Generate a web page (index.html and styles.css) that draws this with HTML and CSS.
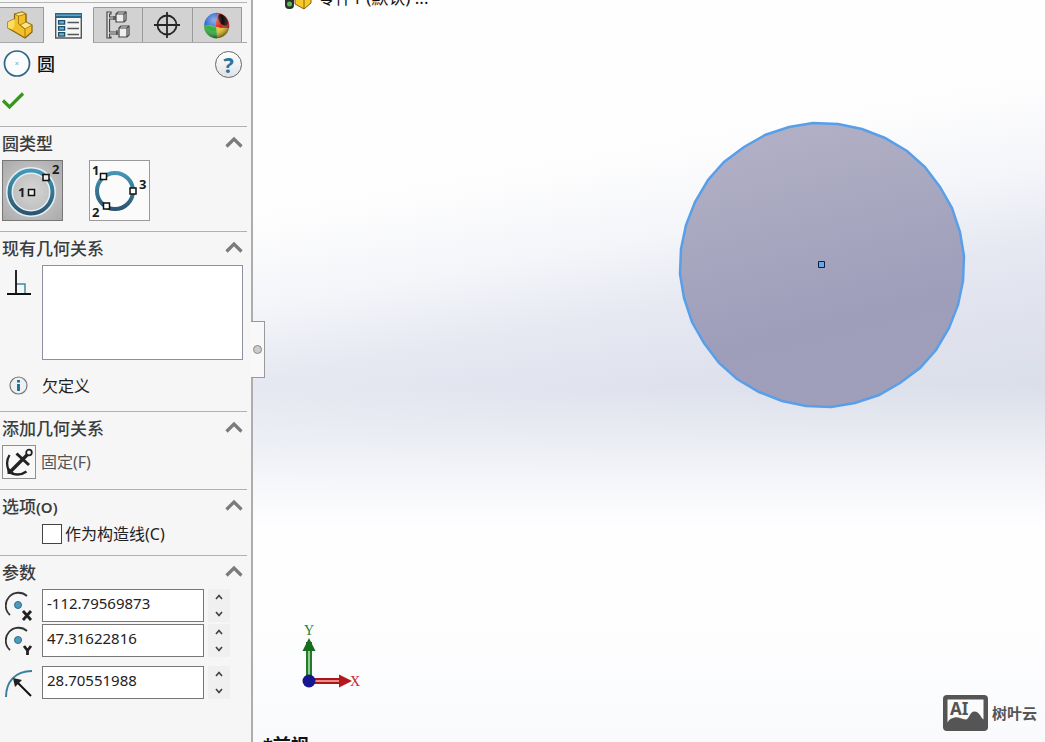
FILE: index.html
```html
<!DOCTYPE html>
<html lang="zh-CN">
<head>
<meta charset="utf-8">
<title>圆</title>
<link rel="stylesheet" href="styles.css">
</head>
<body>
<svg class="defs" width="0" height="0" aria-hidden="true">
  <defs>
    <linearGradient id="ring" x1="0" y1="0" x2="0" y2="1"><stop offset="0" stop-color="#4396b5"/><stop offset="1" stop-color="#2c5670"/></linearGradient>
    <linearGradient id="face" x1="0.35" y1="0" x2="0.6" y2="1"><stop offset="0" stop-color="#b1b0c5"/><stop offset="0.7" stop-color="#9e9ebb"/><stop offset="1" stop-color="#a09fba"/></linearGradient>
    <radialGradient id="shade" cx="0.4" cy="0.3" r="0.7"><stop offset="0" stop-color="#fff" stop-opacity="0.45"/><stop offset="0.5" stop-color="#fff" stop-opacity="0"/><stop offset="1" stop-color="#000" stop-opacity="0.5"/></radialGradient>
    <symbol id="chevron" viewBox="0 0 18 12"><path d="M1.500 10.500 9 3l7.500 7.500" fill="none" stroke="#7b7b7b" stroke-width="3.200"/></symbol>
    <symbol id="up" viewBox="0 0 8 6"><path d="M1 5l3-3.500L7 5" fill="none" stroke="#444" stroke-width="1.700"/></symbol>
    <symbol id="down" viewBox="0 0 8 6"><path d="M1 1l3 3.500L7 1" fill="none" stroke="#444" stroke-width="1.700"/></symbol>
    <symbol id="part" viewBox="0 0 26 28"><path d="M7.500 3 15 1l4 2v8l6 3v7l-7 6L1 17v-6l6.500-3z" fill="#f3c02a" stroke="#8a6508" stroke-width="1.200" stroke-linejoin="round"/><path d="M7.500 3 15 1l4 2-7.500 2zM13 14l6-3 6 3-7 4z" fill="#ffe680" stroke="#9a7310" stroke-width="0.800" stroke-linejoin="round"/><path d="M1 11l6.500-3v6l-2 4.500L1 17z" fill="#ffdf5e"/><path d="M11.500 5v8L18 18v9M19 3v8" fill="none" stroke="#9a7310" stroke-width="0.900"/></symbol>
  </defs>
</svg>
<div class="app">
  <aside class="panel">
    <nav class="tabs">
      <button class="tab tab-first" aria-label="特征"><svg width="26" height="28"><use href="#part"/></svg></button>
      <button class="tab tab-active" aria-label="属性"><svg width="27" height="26" viewBox="0 0 27 26"><path d="M.7 1h25.600v24H.7z" fill="#f4f6f7" stroke="#555" stroke-width="1.400"/><path d="M0 0h27v5H0z" fill="#27688a"/><path d="M1 1.500h25v1.500H1z" fill="#5aa5c4"/><g fill="#6fb4d3" stroke="#1f4e69" stroke-width="1.300"><path d="M3.600 7.600h6v3.500h-6zM3.600 13.600h6v3.500h-6zM3.600 19.600h6v3.500h-6z"/></g><path d="M12.500 9.500H24M12.500 15.500H24M12.500 21.500H24" stroke="#555" stroke-width="1.400"/></svg></button>
      <button class="tab" aria-label="配置"><svg width="24" height="28" viewBox="0 0 24 28"><g fill="#eee" stroke="#444" stroke-width="1.200"><path d="M1 1h4v2H3.500v3H10v2H3.500v13H11v2H3.500v3H5v1H1z"/><path d="M10 3l2-2h8v8l-2 2h-8zM13 17l2-2h8v9l-2 2h-8z"/><path d="M10 3h8v8M18 3l2-2M13 17h8v9M21 17l2-2M8 5v4M11 19v5" fill="none"/></g></svg></button>
      <button class="tab" aria-label="尺寸专家"><svg width="28" height="28" viewBox="0 0 28 28"><g fill="none" stroke="#262626" stroke-width="1.800"><circle cx="14" cy="14" r="9.500"/><path d="M14 1v26M1 14h26"/></g></svg></button>
      <button class="tab" aria-label="外观"><svg width="27" height="27" viewBox="0 0 27 27"><path d="M13 15Q6 12 1 14A13 13 0 0 1 16 1Q12 7 13 15z" fill="#356fd1"/><path d="M13 15Q12 7 16 1A13 13 0 0 1 26 16Q20 17 13 15z" fill="#cf2620"/><path d="M13 15Q20 17 26 16A13 13 0 0 1 14 26.500Q14 20 13 15z" fill="#e6c52c"/><path d="M13 15Q14 20 14 26.500A13 13 0 0 1 1 14Q6 12 13 15z" fill="#32ae3f"/><ellipse cx="20" cy="8" rx="3.800" ry="6.500" transform="rotate(-35 20 8)" fill="#180808"/><circle cx="13.500" cy="13.500" r="12.800" fill="url(#shade)"/></svg></button>
    </nav>
    <header class="heading">
      <svg width="28" height="28" viewBox="0 0 28 28"><circle cx="14" cy="13.500" r="12.500" fill="#fafcfd" stroke="#2c6585" stroke-width="1.700"/><path d="M12.500 12l3 3m0-3l-3 3" stroke="#62a5c6" stroke-width="0.800"/></svg>
      <h1 class="title">圆</h1>
      <button class="help" aria-label="帮助">?</button>
    </header>
    <div class="confirm"><button class="bare" aria-label="确定"><svg width="24" height="18" viewBox="0 0 24 18"><path d="M2 8.500 8.500 15 22 1.500" fill="none" stroke="#37961c" stroke-width="3.200"/></svg></button></div>

    <section class="group">
      <div class="group-head"><h2 class="group-title">圆类型</h2><button class="bare" aria-label="折叠"><svg width="18" height="12"><use href="#chevron"/></svg></button></div>
      <div class="types">
        <button class="type type-on" aria-label="圆"><svg width="59" height="59" viewBox="0 0 59 59"><circle cx="28" cy="31" r="21.500" fill="none" stroke="#e4f0f5" stroke-width="7"/><circle cx="28" cy="31" r="21.500" fill="none" stroke="url(#ring)" stroke-width="4"/><path d="M40 13.500h6v6h-6zM25.500 28.500h6v6h-6z" fill="#eee" stroke="#111" stroke-width="1.500"/><text class="mark" x="49" y="13">2</text><text class="mark" x="15" y="36">1</text></svg></button>
        <button class="type" aria-label="周边圆"><svg width="59" height="59" viewBox="0 0 59 59"><circle cx="25" cy="30" r="18" fill="none" stroke="url(#ring)" stroke-width="4"/><path d="M10.500 12.500h6v6h-6zM40 27h6v6h-6zM13.500 42h6v6h-6z" fill="#fff" stroke="#111" stroke-width="1.500"/><text class="mark" x="2" y="14">1</text><text class="mark" x="49" y="28">3</text><text class="mark" x="2" y="56">2</text></svg></button>
      </div>
    </section>

    <section class="group">
      <div class="group-head"><h2 class="group-title">现有几何关系</h2><button class="bare" aria-label="折叠"><svg width="18" height="12"><use href="#chevron"/></svg></button></div>
      <div class="relations">
        <svg class="perp" width="26" height="27" viewBox="0 0 26 27"><path d="M10 15h9v9" fill="none" stroke="#3e89a8" stroke-width="1.500"/><path d="M10 1v24M1 25h24" fill="none" stroke="#111" stroke-width="1.800"/></svg>
        <div class="list" role="listbox" aria-label="现有几何关系"></div>
      </div>
      <div class="status">
        <svg width="19" height="19" viewBox="0 0 19 19"><circle cx="9.500" cy="9.500" r="8.500" fill="#edf1f3" stroke="#777" stroke-width="1.200"/><path d="M9.500 4v2.500M9.500 8v7" stroke="#206991" stroke-width="2.800"/></svg>
        <span>欠定义</span>
      </div>
    </section>

    <section class="group">
      <div class="group-head"><h2 class="group-title">添加几何关系</h2><button class="bare" aria-label="折叠"><svg width="18" height="12"><use href="#chevron"/></svg></button></div>
      <div class="fix">
        <button class="fix-button" id="fix" aria-label="固定(F)"><svg width="32" height="32" viewBox="0 0 32 32"><g fill="none" stroke="#222"><path d="M24.500 8.500 8 25" stroke-width="3.400"/><path d="M13.500 7.500 26 19" stroke-width="3"/><circle cx="26" cy="6.500" r="2.800" stroke-width="1.800"/><path d="M6.500 9C3.500 14 3.500 20 6 25.500 11 29.500 18 29.500 23.500 25.500" stroke-width="2.300"/></g><path d="M4.500 28v-7.500l7.500 7.500z" fill="#222"/></svg></button>
        <label for="fix">固定(F)</label>
      </div>
    </section>

    <section class="group">
      <div class="group-head"><h2 class="group-title">选项<span class="key">(O)</span></h2><button class="bare" aria-label="折叠"><svg width="18" height="12"><use href="#chevron"/></svg></button></div>
      <div class="option"><input class="check" type="checkbox" id="construction"><label for="construction">作为构造线(C)</label></div>
    </section>

    <section class="group">
      <div class="group-head"><h2 class="group-title">参数</h2><button class="bare" aria-label="折叠"><svg width="18" height="12"><use href="#chevron"/></svg></button></div>
      <div class="params">
        <div class="param">
          <svg width="28" height="30" viewBox="0 0 28 30"><path d="M5 24A12 12 0 0 1 22 5" fill="none" stroke="#333" stroke-width="1.800"/><circle cx="13" cy="14" r="3.500" fill="#4c9cbd" stroke="#2f6d8c"/><path d="M18 20l8 9m0-9l-8 9" stroke="#222" stroke-width="2.800"/></svg>
          <input class="value" type="text" aria-label="圆心 X 坐标" value="-112.79569873">
          <div class="spin"><button class="step" aria-label="增加"><svg width="8" height="6"><use href="#up"/></svg></button><button class="step" aria-label="减少"><svg width="8" height="6"><use href="#down"/></svg></button></div>
        </div>
        <div class="param">
          <svg width="28" height="30" viewBox="0 0 28 30"><path d="M5 24A12 12 0 0 1 22 5" fill="none" stroke="#333" stroke-width="1.800"/><circle cx="13" cy="14" r="3.500" fill="#4c9cbd" stroke="#2f6d8c"/><path d="M19 20l3.500 4.500L26 20M22.500 24v5" fill="none" stroke="#222" stroke-width="2.800"/></svg>
          <input class="value" type="text" aria-label="圆心 Y 坐标" value="47.31622816">
          <div class="spin"><button class="step" aria-label="增加"><svg width="8" height="6"><use href="#up"/></svg></button><button class="step" aria-label="减少"><svg width="8" height="6"><use href="#down"/></svg></button></div>
        </div>
        <div class="param param-radius">
          <svg width="28" height="30" viewBox="0 0 28 30"><path d="M1 29C1 14 10 3 27 3" fill="none" stroke="#397f9f" stroke-width="2"/><path d="M26 28 12 14" stroke="#111" stroke-width="2"/><path d="M8 10l9 2-7 7z" fill="#222"/></svg>
          <input class="value" type="text" aria-label="半径" value="28.70551988">
          <div class="spin"><button class="step" aria-label="增加"><svg width="8" height="6"><use href="#up"/></svg></button><button class="step" aria-label="减少"><svg width="8" height="6"><use href="#down"/></svg></button></div>
        </div>
      </div>
    </section>
  </aside>

  <main class="canvas">
    <button class="splitter" aria-label="隐藏面板"><span class="knob"></span></button>
    <div class="tree">
      <svg width="30" height="24" viewBox="0 0 30 24"><rect x="1" y="2" width="9" height="21" rx="4" fill="#2b332b"/><circle cx="5.500" cy="18" r="2.500" fill="#59bd58"/><path d="M11 9l8-5 8 5v8l-7 6-9-5z" fill="#f5c92c" stroke="#8a6508"/><path d="M11 9l9 4 7-4M20 13v10" fill="none" stroke="#8a6508"/></svg>
      <span>零件1 (默认) ...</span>
    </div>
    <svg class="sketch" width="290" height="290" viewBox="-145 -145 290 290">
      <polygon fill="url(#face)" stroke="#589fe9" stroke-width="2.500" points="-9,-142 16,-141 40,-136 63,-127 85,-114 103,-98 118,-78 130,-57 138,-33 142,-9 141,16 136,40 127,63 114,85 98,103 78,118 57,130 33,138 9,142 -16,141 -40,136 -63,127 -85,114 -103,98 -118,78 -130,57 -138,33 -142,9 -141,-16 -136,-40 -127,-63 -114,-85 -98,-103 -78,-118 -57,-130 -33,-138"/>
      <path d="M-3.500-3.500h6v6h-6z" fill="#62a8ee" stroke="#101b42"/>
    </svg>
    <svg class="triad" width="66" height="70" viewBox="0 0 66 70">
      <path d="M12 20h6v38h-6z" fill="#237b2b"/><path d="M14 22h2v34h-2z" fill="#8fce90"/><path d="M15 16l6.500 13h-13z" fill="#176d1e"/>
      <path d="M18 56h30v6H18z" fill="#a9181b"/><path d="M20 58h26v2H20z" fill="#ee8a8a"/><path d="M45 52.500 58 59l-13 6.500z" fill="#b3191c"/>
      <circle cx="15" cy="59" r="6.500" fill="#16168f"/>
      <text class="axis axis-y" x="15" y="13">Y</text><text class="axis axis-x" x="61" y="64">X</text>
    </svg>
    <div class="view-name">*前视</div>
    <div class="brand">
      <svg width="45" height="36" viewBox="0 0 45 36"><rect width="45" height="36" rx="4" fill="#555"/><path d="M4.500 4.500h36v20c-3-2-4-8-9-8s-5 8-9 8-7-3-11-2-5 2-7 5z" fill="#fbfbfc"/><text class="brand-ai" x="7" y="20">AI</text></svg>
      <span>树叶云</span>
    </div>
  </main>
</div>
</body>
</html>
```

FILE: styles.css
```css
* { box-sizing: border-box; }

body {
  margin: 0;
  font: 16px/20px "Noto Sans", "Noto Sans CJK SC", sans-serif;
  color: #222;
}

svg { display: block; flex: none; }
.defs { position: absolute; }
button { font: inherit; color: inherit; padding: 0; }
.bare { border: 0; background: none; }

.app { display: flex; height: 100vh; overflow: hidden; }

.panel {
  flex: none;
  width: 253px;
  padding: 2px 4px 0 0;
  background: #f6f6f6;
  border-right: 2px solid #adadad;
}

.tabs {
  display: flex;
  height: 41px;
  padding: 4px 5px 0 0;
  border-top: 1px solid #b5b5b5;
  border-bottom: 1px solid #a9a9a9;
}
.tab {
  flex: 1;
  display: flex;
  align-items: center;
  justify-content: center;
  border: 1px solid #9a9a9a;
  border-width: 1px 1px 0 0;
  background: #d2d2d2;
}
.tab-first { flex: none; width: 44px; padding-right: 3px; }
.tab-active { background: #f6f6f6; margin-bottom: -1px; border-color: #f6f6f6 #9a9a9a #f6f6f6 #f6f6f6; }

.heading { display: flex; align-items: center; height: 42px; padding: 0 5px 0 3px; }
.title { flex: 1; margin: 0 0 0 6px; font-size: 18px; line-height: 24px; font-weight: 500; color: #111; }
.help {
  width: 27px;
  height: 27px;
  border: 1px solid #666;
  border-radius: 50%;
  background: linear-gradient(#fff, #dfe3e6);
  color: #2876a0;
  font-size: 22px;
  line-height: 24px;
  font-weight: 700;
}
.confirm { height: 41px; padding: 7px 0 0 1px; }

.group { border-top: 1px solid #b0b0b0; padding: 0 0 10px 2px; }
.group-head { display: flex; align-items: center; justify-content: space-between; height: 33px; padding-right: 4px; }
.group-head .bare { padding-bottom: 3px; }
.group-title { margin: 0; font-size: 17px; line-height: 24px; font-weight: 500; color: #3c3c3c; }
.key { font-size: 15px; font-weight: 600; }

.types { display: flex; gap: 26px; }
.type { width: 61px; height: 61px; border: 1px solid #9a9a9a; background: #fbfbfb; }
.type-on { border-color: #777; background: radial-gradient(#d6d6d6, #a9a9a9); }
.mark { font: 700 13px "Noto Sans", sans-serif; fill: #1c1c1c; }

.relations { display: flex; padding-right: 4px; }
.perp { margin: 4px 10px 0 4px; }
.list { flex: 1; height: 95px; border: 1px solid #8d90a0; background: #fff; }
.status { display: flex; align-items: center; gap: 14px; height: 41px; padding: 10px 0 0 7px; }

.fix { display: flex; align-items: center; gap: 5px; color: #555; }
.fix-button { width: 34px; height: 34px; border: 1px solid #8f8f8f; background: #f8f8f8; }

.option { display: flex; align-items: center; gap: 3px; height: 22px; padding-left: 40px; }
.check { appearance: none; width: 20px; height: 20px; margin: 0; border: 1px solid #444; background: #fff; }

.params { display: grid; gap: 2px; }
.param { display: flex; align-items: center; height: 33px; padding-left: 3px; }
.param-radius { margin-top: 7px; }
.value {
  width: 162px;
  height: 33px;
  margin: 0 4px 0 9px;
  padding: 0 4px 5px;
  border: 1px solid #777;
  background: #fff;
  color: #222;
  font: 15px/20px "Noto Sans", sans-serif;
}
.spin { display: grid; width: 22px; height: 33px; background: #f0f0f0; }
.step { display: flex; align-items: center; justify-content: center; border: 0; background: none; }

.canvas {
  position: relative;
  flex: 1;
  min-width: 0;
  background:
    linear-gradient(180deg, rgba(254, 254, 255, 0) 52%, rgba(254, 254, 255, 0.35) 58%, rgba(254, 254, 255, 0.75) 65%, #fefeff 71%, #fefeff 84%, #f9fafc 100%),
    linear-gradient(170deg, #fefefe 24%, #f4f5f9 35%, #e6e9f2 43%, #dfe2ed 52%, #dbdfea 60%);
}
.splitter {
  position: absolute;
  top: 321px;
  left: -2px;
  width: 14px;
  height: 57px;
  border: 1px solid #999;
  border-left: 0;
  background: #f8f8f8;
}
.knob { display: block; width: 9px; height: 9px; margin-left: 2px; border: 1px solid #888; border-radius: 50%; background: #ccc; }
.tree { position: absolute; top: -14px; left: 31px; display: flex; align-items: center; gap: 4px; color: #111; font-size: 17px; line-height: 24px; }
.sketch { position: absolute; top: 120px; left: 424px; }
.triad { position: absolute; left: 41px; bottom: 50px; }
.axis { font: 14px "Liberation Serif", serif; text-anchor: middle; }
.axis-y { fill: #25832c; }
.axis-x { fill: #cc2222; }
.view-name { position: absolute; left: 10px; bottom: -15px; color: #111; font-size: 18px; line-height: 24px; font-weight: 700; }
.brand { position: absolute; right: 8px; bottom: 11px; display: flex; align-items: center; gap: 4px; color: #555; font-size: 15px; font-weight: 700; }
.brand-ai { font: 700 17px "Noto Sans", sans-serif; fill: #555; }
```
